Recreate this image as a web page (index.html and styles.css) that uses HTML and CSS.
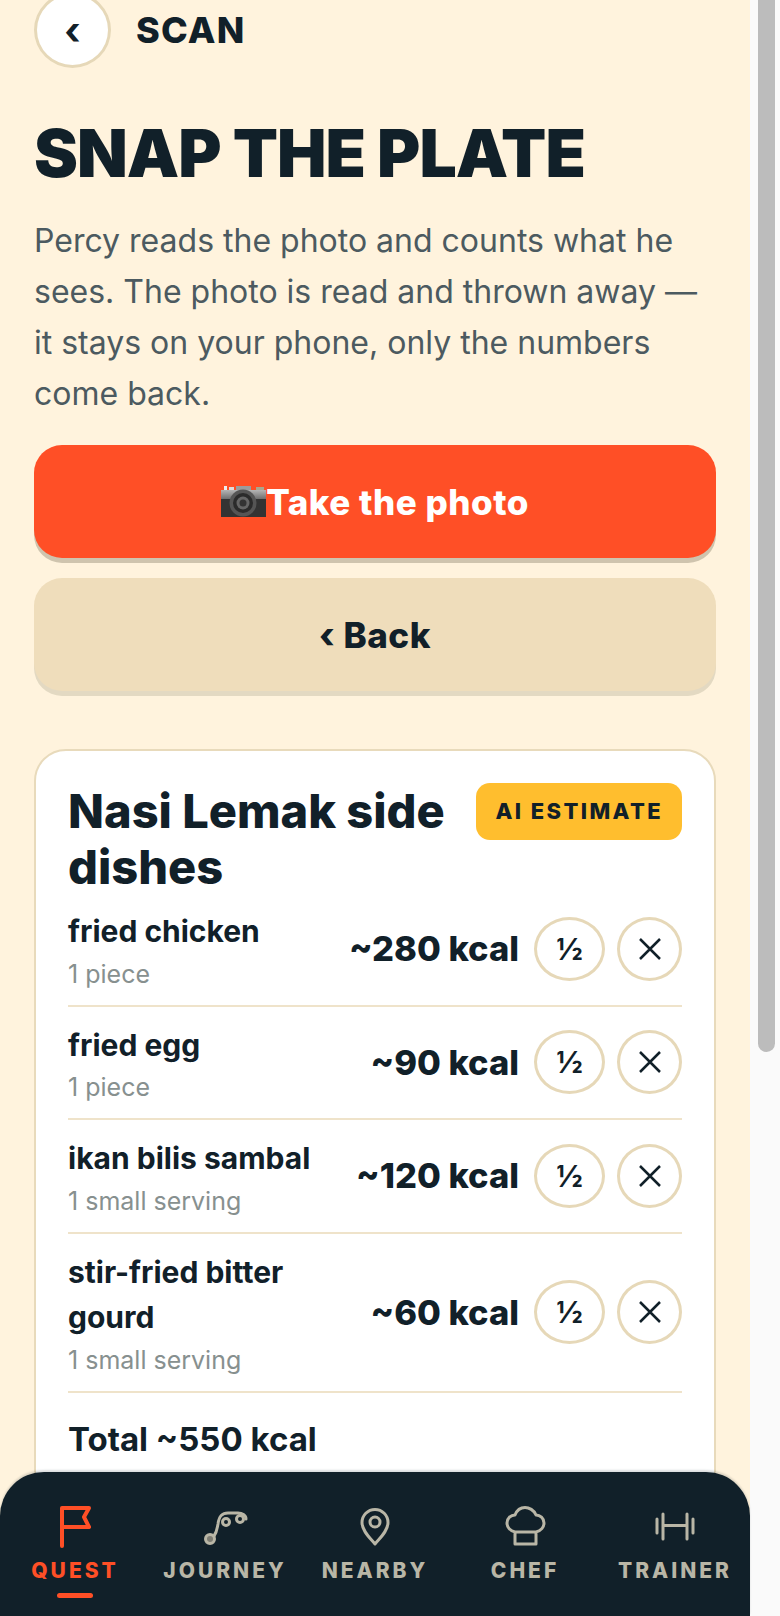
FILE: index.html
```html
<!DOCTYPE html>
<html lang="en">
<head>
  <meta charset="UTF-8" />
  <title>Scan</title>
  <meta name="viewport" content="width=device-width, initial-scale=1" />
  <link rel="stylesheet" href="styles.css">
</head>
<body>
  <div class="app">
    <main class="screen">
      <header class="top-bar">
        <button class="round-back">‹</button>
        <span class="top-title">SCAN</span>
      </header>

      <h1 class="headline">SNAP THE PLATE</h1>
      <p class="intro">Percy reads the photo and counts what he sees. The photo is read and thrown away — it stays on your phone, only the numbers come back.</p>

      <button class="btn btn-primary">
        <svg class="camera" viewBox="0 0 45 31" width="45" height="31">
          <defs>
            <linearGradient id="camTop" x1="0" y1="0" x2="0" y2="1">
              <stop offset="0" stop-color="#b5b5b5"/>
              <stop offset="1" stop-color="#6f6f6f"/>
            </linearGradient>
          </defs>
          <rect x="3" y="0" width="3" height="4" fill="#eee"/>
          <rect x="8" y="1" width="5" height="3" fill="#ddd"/>
          <rect x="15" y="0" width="15" height="4" fill="#9c9c9c"/>
          <rect x="35" y="1" width="8" height="6" fill="#a9a78e"/>
          <rect x="0" y="4" width="45" height="9" fill="url(#camTop)"/>
          <rect x="0" y="13" width="45" height="18" fill="#333"/>
          <circle cx="22" cy="17" r="13.500" fill="#555"/>
          <circle cx="22" cy="17" r="10" fill="#2b2b2b"/>
          <circle cx="22" cy="17" r="6.500" fill="#666"/>
          <circle cx="22" cy="17" r="3.500" fill="#333"/>
        </svg>Take the photo
      </button>
      <button class="btn btn-soft">‹ Back</button>

      <section class="card">
        <div class="card-head">
          <h2 class="card-title">Nasi Lemak side dishes</h2>
          <span class="badge">AI ESTIMATE</span>
        </div>

        <div class="food-row">
          <div class="food-info">
            <div class="food-name">fried chicken</div>
            <div class="food-size">1 piece</div>
          </div>
          <div class="food-kcal">~280 kcal</div>
          <button class="chip chip-half">½</button>
          <button class="chip chip-x"><svg viewBox="0 0 24 24" width="24" height="24"><path d="M2 2 22 22M22 2 2 22"/></svg></button>
        </div>
        <div class="food-row">
          <div class="food-info">
            <div class="food-name">fried egg</div>
            <div class="food-size">1 piece</div>
          </div>
          <div class="food-kcal">~90 kcal</div>
          <button class="chip chip-half">½</button>
          <button class="chip chip-x"><svg viewBox="0 0 24 24" width="24" height="24"><path d="M2 2 22 22M22 2 2 22"/></svg></button>
        </div>
        <div class="food-row">
          <div class="food-info">
            <div class="food-name">ikan bilis sambal</div>
            <div class="food-size">1 small serving</div>
          </div>
          <div class="food-kcal">~120 kcal</div>
          <button class="chip chip-half">½</button>
          <button class="chip chip-x"><svg viewBox="0 0 24 24" width="24" height="24"><path d="M2 2 22 22M22 2 2 22"/></svg></button>
        </div>
        <div class="food-row">
          <div class="food-info">
            <div class="food-name">stir-fried bitter gourd</div>
            <div class="food-size">1 small serving</div>
          </div>
          <div class="food-kcal">~60 kcal</div>
          <button class="chip chip-half">½</button>
          <button class="chip chip-x"><svg viewBox="0 0 24 24" width="24" height="24"><path d="M2 2 22 22M22 2 2 22"/></svg></button>
        </div>

        <div class="total">Total ~550 kcal</div>
      </section>
    </main>

    <div class="scroll-gutter"><div class="scroll-thumb"></div></div>

    <nav class="tabs">
      <a class="tab is-active">
        <svg class="icon-flag" viewBox="0 0 48 48" width="48" height="48"><path d="M11 43V5H38L33 14 38 24H11"/></svg>
        <span>QUEST</span>
      </a>
      <a class="tab">
        <svg viewBox="0 0 48 48" width="48" height="48">
          <circle class="dot" cx="9" cy="36" r="4.500"/><circle cx="25" cy="19" r="3.500"/><circle cx="39" cy="16" r="3.500"/>
          <path d="M13 33C16 29 16 26 17 21 18 13 21 10 27 10H37C41 10 45 12 45 16"/>
        </svg>
        <span>JOURNEY</span>
      </a>
      <a class="tab">
        <svg viewBox="0 0 48 48" width="48" height="48">
          <path d="M24 41C19 35 11 28 11 19.500A13 13 0 0 1 37 19.500C37 28 29 35 24 41Z"/><circle cx="24" cy="19" r="5"/>
        </svg>
        <span>NEARBY</span>
      </a>
      <a class="tab">
        <svg viewBox="0 0 48 48" width="48" height="48">
          <path d="M14 29C9 28 6 24 6 20 6 15 10 12 14 12 16 7 20 4.500 24 4.500S33 7 35 12C39 12 43 15 43 20 43 24 40 28 35 29V41H14ZM14 29H35"/>
        </svg>
        <span>CHEF</span>
      </a>
      <a class="tab">
        <svg viewBox="0 0 48 48" width="48" height="48">
          <path d="M6 16V30M12 11V36M36 11V36M42 16V30M12 22.500H36"/>
        </svg>
        <span>TRAINER</span>
      </a>
      <i class="tab-mark"></i>
    </nav>
  </div>
</body>
</html>
```

FILE: styles.css
```css
html, body {
  margin: 0;
  padding: 0;
  height: 100%;
  overflow: hidden;
  background: #fafafa;
  font-family: 'Inter', sans-serif;
  color: #112029;
}

button {
  font-family: inherit;
  color: inherit;
}

.app {
  position: relative;
  display: flex;
  width: 780px;
  height: 1616px;
  overflow: hidden;
}

.screen {
  width: 750px;
  height: 1616px;
  box-sizing: border-box;
  padding: 0 34px;
  background: #fff3dd;
  flex: none;
}

.top-bar {
  display: flex;
  align-items: center;
  gap: 25px;
  margin-top: -8px;
}

.round-back {
  width: 77px;
  height: 76px;
  border: 3px solid #e6d8b8;
  border-radius: 50%;
  background: #fff;
  font-size: 38px;
  font-weight: 700;
  line-height: 1;
  padding: 0;
}

.top-title {
  font-size: 36px;
  font-weight: 800;
  letter-spacing: 1.200px;
}

.headline {
  margin: 46px 0 0;
  font-size: 66px;
  font-weight: 900;
  line-height: 79px;
  letter-spacing: -1px;
}

.intro {
  margin: 22px 0 0;
  font-size: 32px;
  line-height: 51px;
  color: #4c5a60;
}

.btn {
  display: flex;
  align-items: center;
  justify-content: center;
  width: 100%;
  height: 113px;
  border: 0;
  border-radius: 28px;
  font-size: 35px;
  font-weight: 800;
  letter-spacing: 0.500px;
}

.btn-primary {
  margin-top: 26px;
  background: #ff4f26;
  color: #fff;
  box-shadow: 0 5px 0 #cfc4ae;
}

.btn-soft {
  margin-top: 20px;
  background: #efddbb;
  box-shadow: 0 5px 0 #e3d9c2;
}

.card {
  margin-top: 58px;
  padding: 32px 32px 120px;
  border: 2px solid #e8dabb;
  border-radius: 32px;
  background: #fff;
}

.card-head {
  display: flex;
  justify-content: space-between;
  align-items: flex-start;
  gap: 24px;
  margin-bottom: -2px;
}

.card-title {
  margin: 0;
  font-size: 47px;
  font-weight: 800;
  line-height: 56px;
}

.badge {
  flex: none;
  padding: 0 19px;
  height: 57px;
  line-height: 57px;
  border-radius: 14px;
  background: #ffbe2e;
  font-size: 22px;
  font-weight: 800;
  letter-spacing: 2.400px;
}

.food-row {
  display: flex;
  align-items: center;
  padding: 12px 0;
  border-bottom: 2px solid #efe3ca;
}

.food-info {
  flex: 1;
  min-width: 0;
  margin: 4px 16px 0 0;
}

.food-name {
  font-size: 30px;
  font-weight: 700;
  line-height: 45.500px;
}

.food-size {
  font-size: 25px;
  line-height: 38px;
  color: #87908f;
}

.food-kcal {
  flex: none;
  margin-right: 15px;
  font-size: 34.500px;
  font-weight: 800;
}

.chip {
  flex: none;
  height: 64px;
  box-sizing: border-box;
  border: 3px solid #e6d8b8;
  border-radius: 50%;
  background: #fff;
  padding: 0;
}

.chip-half {
  width: 71px;
  font-size: 30px;
  font-weight: 700;
}

.chip-x {
  width: 65px;
  margin-left: 12px;
  display: flex;
  align-items: center;
  justify-content: center;
}

.chip-x path {
  fill: none;
  stroke: #112029;
  stroke-width: 2.500;
}

.total {
  margin-top: 26px;
  font-size: 33px;
  font-weight: 700;
}

.scroll-gutter {
  flex: none;
  width: 30px;
  background: #fafafa;
}

.scroll-thumb {
  width: 17px;
  height: 1052px;
  margin-left: 8px;
  border-radius: 0 0 9px 9px;
  background: #bcbcbc;
}

/* bottom tabs sit over the page */
.tabs {
  position: absolute;
  left: 0;
  bottom: 0;
  width: 750px;
  height: 144px;
  display: grid;
  grid-template-columns: repeat(5, 1fr);
  background: #112029;
  border-radius: 44px 44px 0 0;
  box-shadow: 0 -2px 2px rgba(17, 32, 41, 0.15);
}

.tab {
  display: flex;
  flex-direction: column;
  align-items: center;
  padding-top: 31px;
  color: #b9b6a6;
  font-size: 21px;
  font-weight: 800;
  letter-spacing: 3px;
  line-height: 26px;
}

.tab svg {
  fill: none;
  stroke: currentColor;
  stroke-width: 3;
  stroke-linecap: round;
  stroke-linejoin: round;
  margin-bottom: 7px;
}

.tab .icon-flag {
  stroke-width: 4;
}

.tab .dot {
  fill: #7d7c72;
}

.tab.is-active {
  color: #ff4f26;
}

.tab-mark {
  position: absolute;
  left: 57px;
  top: 121px;
  width: 36px;
  height: 5px;
  border-radius: 3px;
  background: #ff4f26;
}
```
